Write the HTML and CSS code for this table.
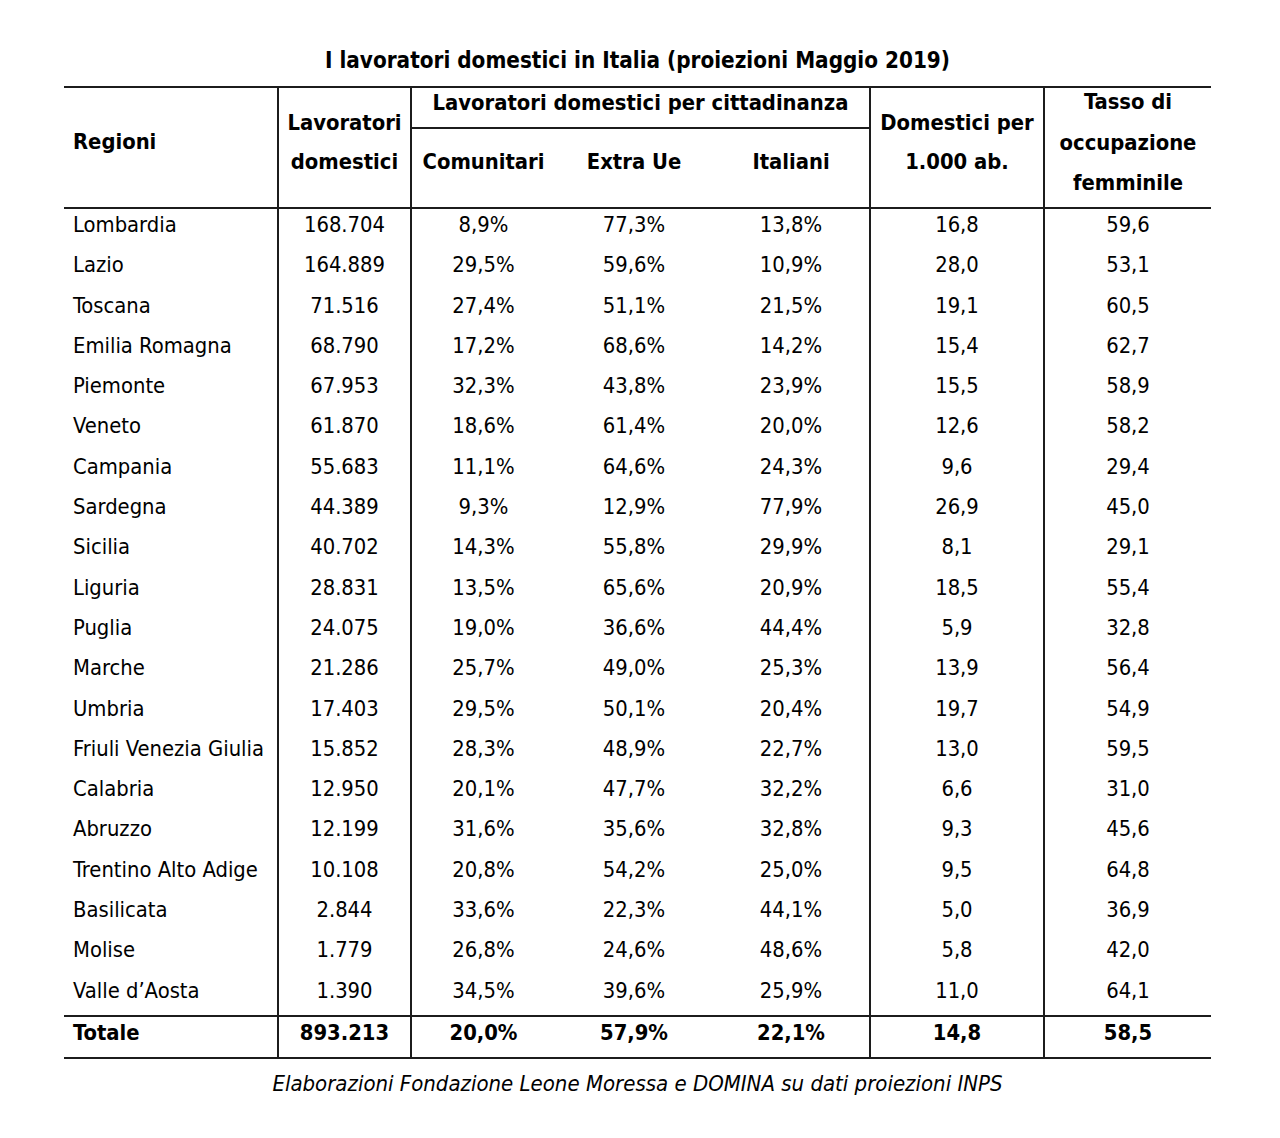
FILE: index.html
```html
<!DOCTYPE html>
<html lang="it">
<head>
<meta charset="utf-8">
<title>I lavoratori domestici in Italia</title>
<link rel="stylesheet" href="styles.css">
</head>
<body>
<div class="page">
  <h1 class="title">I lavoratori domestici in Italia (proiezioni Maggio 2019)</h1>
  <table class="data">
    <colgroup>
      <col class="c-reg"><col class="c-lav"><col class="c-com"><col class="c-ext"><col class="c-ita"><col class="c-dom"><col class="c-tas">
    </colgroup>
    <thead>
      <tr class="h1">
        <th rowspan="2" class="h-reg vr">Regioni</th>
        <th rowspan="2" class="h-two vr">Lavoratori<br>domestici</th>
        <th colspan="3" class="h-group vr">Lavoratori domestici per cittadinanza</th>
        <th rowspan="2" class="h-two vr">Domestici per<br>1.000 ab.</th>
        <th rowspan="2" class="h-three"><div class="stack">Tasso di<br>occupazione<br>femminile</div></th>
      </tr>
      <tr class="h2">
        <th class="h-sub">Comunitari</th>
        <th class="h-sub">Extra Ue</th>
        <th class="h-sub vr">Italiani</th>
      </tr>
    </thead>
    <tbody>
      <tr><td class="reg vr">Lombardia</td><td class="vr">168.704</td><td>8,9%</td><td>77,3%</td><td class="vr">13,8%</td><td class="vr">16,8</td><td>59,6</td></tr>
      <tr><td class="reg vr">Lazio</td><td class="vr">164.889</td><td>29,5%</td><td>59,6%</td><td class="vr">10,9%</td><td class="vr">28,0</td><td>53,1</td></tr>
      <tr><td class="reg vr">Toscana</td><td class="vr">71.516</td><td>27,4%</td><td>51,1%</td><td class="vr">21,5%</td><td class="vr">19,1</td><td>60,5</td></tr>
      <tr><td class="reg vr">Emilia Romagna</td><td class="vr">68.790</td><td>17,2%</td><td>68,6%</td><td class="vr">14,2%</td><td class="vr">15,4</td><td>62,7</td></tr>
      <tr><td class="reg vr">Piemonte</td><td class="vr">67.953</td><td>32,3%</td><td>43,8%</td><td class="vr">23,9%</td><td class="vr">15,5</td><td>58,9</td></tr>
      <tr><td class="reg vr">Veneto</td><td class="vr">61.870</td><td>18,6%</td><td>61,4%</td><td class="vr">20,0%</td><td class="vr">12,6</td><td>58,2</td></tr>
      <tr><td class="reg vr">Campania</td><td class="vr">55.683</td><td>11,1%</td><td>64,6%</td><td class="vr">24,3%</td><td class="vr">9,6</td><td>29,4</td></tr>
      <tr><td class="reg vr">Sardegna</td><td class="vr">44.389</td><td>9,3%</td><td>12,9%</td><td class="vr">77,9%</td><td class="vr">26,9</td><td>45,0</td></tr>
      <tr><td class="reg vr">Sicilia</td><td class="vr">40.702</td><td>14,3%</td><td>55,8%</td><td class="vr">29,9%</td><td class="vr">8,1</td><td>29,1</td></tr>
      <tr><td class="reg vr">Liguria</td><td class="vr">28.831</td><td>13,5%</td><td>65,6%</td><td class="vr">20,9%</td><td class="vr">18,5</td><td>55,4</td></tr>
      <tr><td class="reg vr">Puglia</td><td class="vr">24.075</td><td>19,0%</td><td>36,6%</td><td class="vr">44,4%</td><td class="vr">5,9</td><td>32,8</td></tr>
      <tr><td class="reg vr">Marche</td><td class="vr">21.286</td><td>25,7%</td><td>49,0%</td><td class="vr">25,3%</td><td class="vr">13,9</td><td>56,4</td></tr>
      <tr><td class="reg vr">Umbria</td><td class="vr">17.403</td><td>29,5%</td><td>50,1%</td><td class="vr">20,4%</td><td class="vr">19,7</td><td>54,9</td></tr>
      <tr><td class="reg vr">Friuli Venezia Giulia</td><td class="vr">15.852</td><td>28,3%</td><td>48,9%</td><td class="vr">22,7%</td><td class="vr">13,0</td><td>59,5</td></tr>
      <tr><td class="reg vr">Calabria</td><td class="vr">12.950</td><td>20,1%</td><td>47,7%</td><td class="vr">32,2%</td><td class="vr">6,6</td><td>31,0</td></tr>
      <tr><td class="reg vr">Abruzzo</td><td class="vr">12.199</td><td>31,6%</td><td>35,6%</td><td class="vr">32,8%</td><td class="vr">9,3</td><td>45,6</td></tr>
      <tr><td class="reg vr">Trentino Alto Adige</td><td class="vr">10.108</td><td>20,8%</td><td>54,2%</td><td class="vr">25,0%</td><td class="vr">9,5</td><td>64,8</td></tr>
      <tr><td class="reg vr">Basilicata</td><td class="vr">2.844</td><td>33,6%</td><td>22,3%</td><td class="vr">44,1%</td><td class="vr">5,0</td><td>36,9</td></tr>
      <tr><td class="reg vr">Molise</td><td class="vr">1.779</td><td>26,8%</td><td>24,6%</td><td class="vr">48,6%</td><td class="vr">5,8</td><td>42,0</td></tr>
      <tr><td class="reg vr">Valle d’Aosta</td><td class="vr">1.390</td><td>34,5%</td><td>39,6%</td><td class="vr">25,9%</td><td class="vr">11,0</td><td>64,1</td></tr>
    </tbody>
    <tfoot>
      <tr><td class="reg vr">Totale</td><td class="vr">893.213</td><td>20,0%</td><td>57,9%</td><td class="vr">22,1%</td><td class="vr">14,8</td><td>58,5</td></tr>
    </tfoot>
  </table>
  <p class="note">Elaborazioni Fondazione Leone Moressa e DOMINA su dati proiezioni INPS</p>
</div>
</body>
</html>
```
FILE: styles.css
```css
html, body {
  margin: 0;
  padding: 0;
  background: #ffffff;
}

body {
  font-family: "DejaVu Sans Condensed", "DejaVu Sans", sans-serif;
  font-size: 21.8px;
  color: #000000;
}

.page {
  width: 1147px;
  padding: 45px 0 0 64px;
}

.title {
  margin: 0 0 11px;
  font-size: 22.3px;
  font-weight: bold;
  line-height: 30px;
  text-align: center;
}

.data {
  width: 1147px;
  border-collapse: collapse;
  table-layout: fixed;
  border-top: 2px solid #1c1c1c;
  border-bottom: 2px solid #1c1c1c;
}

.c-reg { width: 214px; }
.c-lav { width: 133px; }
.c-com { width: 144px; }
.c-ext { width: 158px; }
.c-ita { width: 157px; }
.c-dom { width: 174px; }
.c-tas { width: 167px; }

.vr {
  border-right: 2px solid #1c1c1c;
}

thead th {
  font-weight: bold;
  text-align: center;
  vertical-align: top;
  padding: 0;
  white-space: nowrap;
}

thead {
  border-bottom: 2px solid #1c1c1c;
}

.h1 { height: 41px; }
.h2 { height: 80px; }

.h-reg {
  text-align: left;
  padding: 39px 0 0 9px;
  line-height: 30px;
}

.h-two {
  line-height: 39px;
  padding-top: 15px;
}

.h-group {
  line-height: 30px;
  border-bottom: 2px solid #1c1c1c;
}

.h-sub {
  line-height: 30px;
  padding-top: 18px;
}

.h-three {
  line-height: 40.5px;
}

.h-three .stack {
  margin-top: -6px;
}

tbody td, tfoot td {
  text-align: center;
  padding: 0 0 9px;
  line-height: 31.3px;
  white-space: nowrap;
}

tbody td.reg, tfoot td.reg {
  text-align: left;
  padding-left: 9px;
}

tfoot {
  border-top: 2px solid #1c1c1c;
}

tfoot td {
  font-weight: bold;
}

.note {
  margin: 10px 0 0;
  font-style: italic;
  font-size: 22px;
  text-align: center;
  line-height: 30px;
}
```
